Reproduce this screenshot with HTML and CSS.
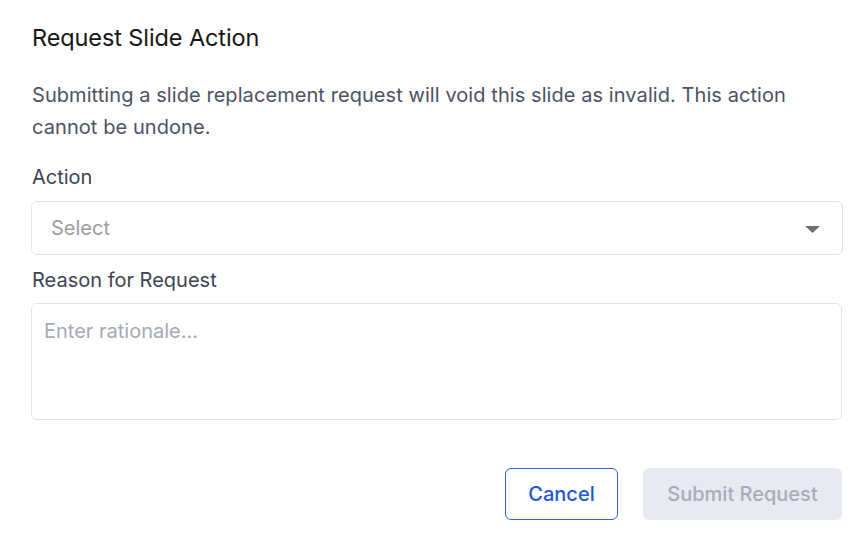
FILE: index.html
```html
<!DOCTYPE html>
<html lang="en">
<head>
<meta charset="utf-8">
<title>Request Slide Action</title>
<link rel="stylesheet" href="styles.css">
</head>
<body>
<div class="dialog">
  <h1 class="title">Request Slide Action</h1>
  <p class="desc">Submitting a slide replacement request will void this slide as invalid. This action cannot be undone.</p>
  <div class="field">
    <label class="label">Action</label>
    <div class="select">
      <span class="placeholder">Select</span>
      <svg class="caret" width="15" height="7" viewBox="0 0 15 7"><path d="M0 0H15L7.5 7Z" fill="#707070"/></svg>
    </div>
  </div>
  <div class="field">
    <label class="label">Reason for Request</label>
    <div class="textarea"><span class="placeholder2">Enter rationale...</span></div>
  </div>
  <div class="actions">
    <button class="btn btn-cancel">Cancel</button>
    <button class="btn btn-submit">Submit Request</button>
  </div>
</div>
</body>
</html>
```
FILE: styles.css
```css
* { box-sizing: border-box; }
html, body { margin: 0; padding: 0; background: #ffffff; }
body { font-family: Inter, "Noto Sans", sans-serif; }
.dialog {
  width: 843px;
  padding: 24px 0 0 31px;
  display: flex;
  flex-direction: column;
}
.title {
  margin: 0 0 0 1px;
  font-size: 23.5px;
  line-height: 28px;
  font-weight: 420;
  color: #161616;
  letter-spacing: -0.1px;
}
.desc {
  margin: 27px 0 0 1px;
  font-size: 20px;
  line-height: 32px;
  color: #4b5265;
  font-weight: 400;
  letter-spacing: 0.07px;
}
.field { display: flex; flex-direction: column; }
.label {
  margin: 20px 0 0 1px;
  font-size: 20px;
  line-height: 28px;
  color: #3d4354;
}
.field + .field .label { margin-top: 11px; }
.select {
  margin-top: 10px;
  height: 54px;
  border: 1px solid #e2e4ea;
  border-radius: 6px;
  display: flex;
  align-items: center;
  justify-content: space-between;
  padding: 0 22px 0 19px;
}
.placeholder { font-size: 20px; color: #9a9ca3; }
.caret { display: block; margin-top: 2px; }
.textarea {
  margin-top: 9px;
  width: 811px;
  height: 117px;
  border: 1px solid #e2e4ea;
  border-radius: 6px;
  padding: 13px 12px;
}
.placeholder2 { font-size: 20px; line-height: 28px; color: #a5a9b6; display: block; }
.actions {
  margin-top: 48px;
  display: flex;
  justify-content: flex-end;
  gap: 25px;
  padding-right: 1px;
}
.btn {
  height: 52px;
  border-radius: 6px;
  font-family: Inter, "Noto Sans", sans-serif;
  font-size: 20px;
  font-weight: 500;
  cursor: pointer;
}
.btn-cancel {
  width: 113px;
  background: #ffffff;
  border: 1.5px solid #2f64e0;
  color: #2157d9;
}
.btn-submit {
  width: 199px;
  background: #e8eaf1;
  border: none;
  color: #a8acbb;
}
```
